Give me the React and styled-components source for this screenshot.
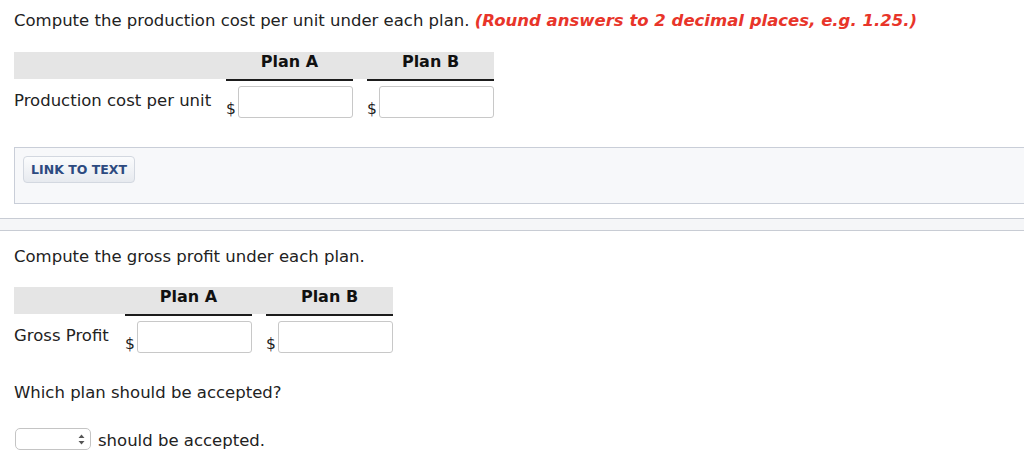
import React from "react";
import styled, { createGlobalStyle } from "styled-components";

const GlobalStyle = createGlobalStyle`
  body {
    margin: 0;
    background: #fff;
    font-family: "DejaVu Sans", Verdana, sans-serif;
    font-size: 16.5px;
    color: #222;
  }
`;

const Page = styled.div`
  width: 1024px;
  height: 476px;
  overflow: hidden;
  padding-top: 11px;
  box-sizing: border-box;
`;

const Section = styled.div`
  padding-left: 14px;
`;

const Prompt = styled.p`
  margin: ${(p) => p.$top || 0}px 0 0;
  line-height: 20px;
`;

const Hint = styled.span`
  color: #e8352a;
  font-weight: bold;
  font-style: italic;
`;

const Table = styled.div`
  width: ${(p) => p.$labelWidth + 282}px;
  margin-top: ${(p) => p.$top}px;
`;

const HeadRow = styled.div`
  display: grid;
  grid-template-columns: ${(p) => p.$labelWidth}px 127px 127px;
  column-gap: 14px;
  height: 27px;
  background: #e5e5e5;
  margin-bottom: 2px;
`;

const HeadCell = styled.div`
  text-align: center;
  line-height: 20px;
  font-weight: bold;
  font-size: 16px;
  color: #111;
  box-shadow: ${(p) => (p.$ruled ? "0 2px 0 #1c1c1c" : "none")};
`;

const BodyRow = styled.div`
  display: grid;
  grid-template-columns: ${(p) => p.$labelWidth}px 127px 127px;
  column-gap: 14px;
  padding-top: 5px;
`;

const RowLabel = styled.div`
  padding-top: 5px;
  line-height: 20px;
  white-space: nowrap;
`;

const AmountCell = styled.div`
  display: flex;
  align-items: flex-end;
`;

const Dollar = styled.span`
  width: 12px;
  line-height: 18px;
  flex-shrink: 0;
  font-size: 15.5px;
`;

const Amount = styled.input`
  flex: 1;
  min-width: 0;
  height: 32px;
  box-sizing: border-box;
  border: 1px solid #c8c8c8;
  border-radius: 3px;
  background: #fff;
`;

const LinkBox = styled.div`
  margin: 29px 0 0 14px;
  height: 57px;
  box-sizing: border-box;
  background: #f7f8fa;
  border: 1px solid #c9ced8;
  border-right: none;
  padding: 8px 0 0 8px;
`;

const LinkButton = styled.button`
  width: 112px;
  height: 27px;
  border: 1px solid #d3d8e0;
  border-radius: 4px;
  background: linear-gradient(#fbfcfd, #e7eaef);
  color: #2c4a80;
  font-family: "DejaVu Sans", Verdana, sans-serif;
  font-weight: bold;
  font-size: 12.5px;
  padding: 0;
`;

const Divider = styled.div`
  margin-top: 14px;
  height: 13px;
  box-sizing: border-box;
  background: #f5f6f8;
  border-top: 1px solid #c8ccd4;
  border-bottom: 1px solid #c8ccd4;
`;

const Answer = styled.div`
  display: flex;
  align-items: center;
  gap: 7px;
  margin-top: 24px;
  margin-left: 1px;
`;

const Chooser = styled.div`
  width: 76px;
  height: 22px;
  box-sizing: border-box;
  border: 1px solid #c4c4c4;
  border-radius: 5px;
  background: #fff;
  display: flex;
  align-items: center;
  justify-content: flex-end;
  padding-right: 5px;
`;

const Sentence = styled.span`
  line-height: 20px;
  padding-top: 4px;
`;

function AnswerTable({ label, labelWidth, top }) {
  return (
    <Table $labelWidth={labelWidth} $top={top}>
      <HeadRow $labelWidth={labelWidth}>
        <HeadCell />
        <HeadCell $ruled>Plan A</HeadCell>
        <HeadCell $ruled>Plan B</HeadCell>
      </HeadRow>
      <BodyRow $labelWidth={labelWidth}>
        <RowLabel>{label}</RowLabel>
        <AmountCell>
          <Dollar>$</Dollar>
          <Amount type="text" />
        </AmountCell>
        <AmountCell>
          <Dollar>$</Dollar>
          <Amount type="text" />
        </AmountCell>
      </BodyRow>
    </Table>
  );
}

export default function App() {
  return (
    <>
      <GlobalStyle />
      <Page>
        <Section>
          <Prompt>
            Compute the production cost per unit under each plan.{" "}
            <Hint>(Round answers to 2 decimal places, e.g. 1.25.)</Hint>
          </Prompt>
          <AnswerTable label="Production cost per unit" labelWidth={198} top={21} />
        </Section>
        <LinkBox>
          <LinkButton>LINK TO TEXT</LinkButton>
        </LinkBox>
        <Divider />
        <Section>
          <Prompt $top={16}>Compute the gross profit under each plan.</Prompt>
          <AnswerTable label="Gross Profit" labelWidth={97} top={20} />
          <Prompt $top={30}>Which plan should be accepted?</Prompt>
          <Answer>
            <Chooser>
              <svg width="7" height="11" viewBox="0 0 7 11">
                <path d="M3.5 0.5 L6.5 4 L0.5 4 Z M3.5 10.5 L6.5 7 L0.5 7 Z" fill="#555" />
              </svg>
            </Chooser>
            <Sentence>should be accepted.</Sentence>
          </Answer>
        </Section>
      </Page>
    </>
  );
}
